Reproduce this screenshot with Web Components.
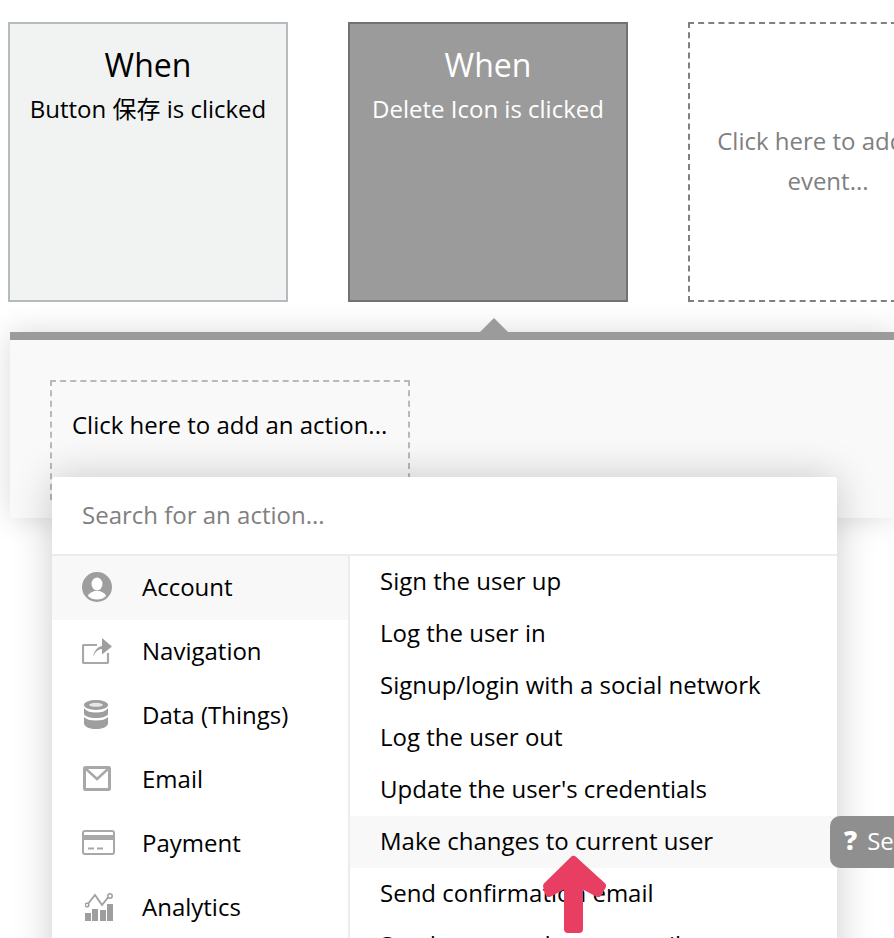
<!DOCTYPE html>
<html>
<head>
<meta charset="utf-8">
<title>Workflow</title>
<style>
html,body{margin:0;padding:0;background:#fff;overflow:hidden;}
body{width:894px;height:938px;font-family:"Open Sans","Noto Sans CJK SC",sans-serif;color:#000;}
</style>
</head>
<body>
<wf-page>
  <wf-event slot="events" title-text="When">Button 保存 is clicked</wf-event>
  <wf-event slot="events" title-text="When" selected>Delete Icon is clicked</wf-event>
  <wf-event slot="events" empty>Click here to add an event...</wf-event>
  <wf-panel slot="panel"></wf-panel>
  <wf-action-menu slot="menu">
    <wf-category icon="account" active>Account</wf-category>
    <wf-category icon="nav">Navigation</wf-category>
    <wf-category icon="data">Data (Things)</wf-category>
    <wf-category icon="email">Email</wf-category>
    <wf-category icon="payment">Payment</wf-category>
    <wf-category icon="analytics">Analytics</wf-category>
    <wf-item slot="items">Sign the user up</wf-item>
    <wf-item slot="items">Log the user in</wf-item>
    <wf-item slot="items">Signup/login with a social network</wf-item>
    <wf-item slot="items">Log the user out</wf-item>
    <wf-item slot="items">Update the user's credentials</wf-item>
    <wf-item slot="items" active>Make changes to current user</wf-item>
    <wf-item slot="items">Send confirmation email</wf-item>
    <wf-item slot="items">Send password reset email</wf-item>
  </wf-action-menu>
  <wf-help slot="help">See</wf-help>
  <wf-arrow slot="arrow"></wf-arrow>
</wf-page>

<script>
//icons for the left column of the action menu
const ICONS = {
    account: `<svg width="30" height="30" viewBox="0 0 30 30"><circle cx="15" cy="15" r="15" fill="#9e9e9e"/><ellipse cx="15" cy="12" rx="5.500" ry="6.500" fill="#fff"/><path d="M6 24c.5-2.500 4-4 6.500-5h5c2.500 1 6 2.500 6.500 5-1.500 1.800-5 3.500-9 3.500S7.500 25.800 6 24z" fill="#fff"/></svg>`,
    nav: `<svg width="30" height="26" viewBox="0 0 30 26"><path d="M15 7H2a1 1 0 0 0-1 1v16a1 1 0 0 0 1 1h23a1 1 0 0 0 1-1v-9" fill="none" stroke="#a8a8a8" stroke-width="2.200"/><path d="M11 19c1-6 4-10 9-11V0l10 8.500-10 8V11c-4 0-7 3-9 8z" fill="#9e9e9e"/></svg>`,
    data: `<svg width="24" height="29" viewBox="0 0 24 29" style="margin-left:2px"><ellipse cx="12" cy="5" rx="12" ry="5" fill="#9e9e9e"/><ellipse cx="12" cy="4.800" rx="7" ry="2" fill="#e6e6e6"/><path d="M0 8c2 3 6 4.500 12 4.500S22 11 24 8v6c-1 2.500-6 4-12 4S1 16.500 0 14z" fill="#9e9e9e"/><path d="M0 17c2 2.500 6 3.500 12 3.500S22 19.500 24 17v7c-1 3-6 5-12 5S1 27 0 24z" fill="#9e9e9e"/></svg>`,
    email: `<svg width="28" height="25" viewBox="0 0 28 25" style="margin-left:1px"><rect x="1.500" y="1.500" width="25" height="22" rx="1" fill="none" stroke="#a8a8a8" stroke-width="3"/><path d="M3 3l11 10L25 3" fill="none" stroke="#a8a8a8" stroke-width="2.500"/></svg>`,
    payment: `<svg width="33" height="25" viewBox="0 0 33 25"><rect x="1" y="1" width="31" height="23" rx="2" fill="none" stroke="#a8a8a8" stroke-width="2"/><rect x="1" y="5" width="31" height="5" fill="#a8a8a8"/><path d="M6 18.500h6M15 18.500h6" stroke="#a8a8a8" stroke-width="2"/></svg>`,
    analytics: `<svg width="28" height="28" viewBox="0 0 28 28" style="margin-left:3px"><g fill="#9e9e9e"><rect x="0" y="20" width="6" height="8"/><rect x="7" y="16" width="6" height="12"/><rect x="15" y="17" width="6" height="11"/><rect x="22" y="11" width="6" height="17"/></g><path d="M2 12l8-10 7 10 8-10" fill="none" stroke="#9e9e9e" stroke-width="1.800"/><g fill="#fff" stroke="#9e9e9e" stroke-width="1.500"><circle cx="2" cy="12" r="1.800"/><circle cx="25" cy="3" r="2.200"/></g></svg>`
}

//tiny helper so every element below does not repeat attachShadow
class WfBase extends HTMLElement{
    constructor(){
        super()
        this.attachShadow({mode: "open"})
    }
    render(html){
        this.shadowRoot.innerHTML = html
    }
}

class WfPage extends WfBase{
    connectedCallback(){
        this.render(`
            <style>
                :host{display:block;position:relative;width:894px;height:938px;overflow:hidden;}
                .events{display:flex;gap:60px;padding:22px 0 0 8px;width:1100px;}
                .panel{padding:30px 0 0 10px;}
            </style>
            <div class="events"><slot name="events"></slot></div>
            <div class="panel"><slot name="panel"></slot></div>
            <slot name="menu"></slot>
            <slot name="help"></slot>
            <slot name="arrow"></slot>
        `)
    }
}
customElements.define('wf-page', WfPage)

class WfEvent extends WfBase{
    connectedCallback(){
        const title = this.getAttribute('title-text')
        this.render(`
            <style>
                :host{display:flex;flex-direction:column;box-sizing:border-box;flex:none;width:280px;height:280px;
                    border:2px solid #b4babd;background:#f1f3f3;color:#000;text-align:center;font-size:24px;}
                :host([selected]){background:#9b9b9b;border-color:#717171;color:#fff;}
                :host([empty]){background:#fff;border:2px dashed #808080;color:#808080;justify-content:center;padding:0 20px 2px;line-height:40px;}
                .title{font-size:32px;line-height:44px;margin-top:19px;}
                .sub{line-height:34px;margin-top:5px;}
            </style>
            ${title ? `<div class="title">${title}</div><div class="sub"><slot></slot></div>` : `<div><slot></slot></div>`}
        `)
    }
}
customElements.define('wf-event', WfEvent)

class WfPanel extends WfBase{
    connectedCallback(){
        this.render(`
            <style>
                :host{display:block;position:relative;box-sizing:border-box;height:186px;background:#f9f9f9;border-top:8px solid #9b9b9b;
                    border-bottom-left-radius:3px;box-shadow:0 0 30px rgba(0,0,0,.15);padding:40px 0 0 40px;}
                .notch{position:absolute;left:470px;top:-22px;width:0;height:0;border:14px solid transparent;border-top:0;border-bottom-color:#9b9b9b;}
                .add{box-sizing:border-box;width:360px;height:120px;border:2px dashed #b9b9b9;padding:26px 0 0 20px;font-size:24px;line-height:34px;color:#000;white-space:nowrap;}
            </style>
            <div class="notch"></div>
            <div class="add">Click here to add an action...</div>
        `)
    }
}
customElements.define('wf-panel', WfPanel)

class WfActionMenu extends WfBase{
    connectedCallback(){
        this.render(`
            <style>
                :host{display:block;position:absolute;left:52px;top:477px;width:785px;height:520px;background:#fff;
                    border-radius:3px 3px 0 0;box-shadow:0 0 40px rgba(0,0,0,.2);font-size:24px;}
                .search{box-sizing:border-box;height:79px;padding:21px 0 0 30px;line-height:34px;color:#808080;border-bottom:2px solid #ececec;}
                .body{display:flex;}
                .cats{width:296px;flex:none;border-right:2px solid #ececec;}
                .items{flex:1;}
            </style>
            <div class="search">Search for an action...</div>
            <div class="body">
                <div class="cats"><slot></slot></div>
                <div class="items"><slot name="items"></slot></div>
            </div>
        `)
    }
}
customElements.define('wf-action-menu', WfActionMenu)

class WfCategory extends WfBase{
    connectedCallback(){
        this.render(`
            <style>
                :host{display:flex;align-items:center;box-sizing:border-box;height:64px;padding-bottom:3px;color:#000;}
                :host([active]){background:#f8f8f8;}
                .icon{width:90px;flex:none;display:flex;padding-left:30px;box-sizing:border-box;}
                .label{margin-bottom:1px;}
            </style>
            <div class="icon">${ICONS[this.getAttribute('icon')]}</div>
            <div class="label"><slot></slot></div>
        `)
    }
}
customElements.define('wf-category', WfCategory)

class WfItem extends WfBase{
    connectedCallback(){
        this.render(`
            <style>
                :host{display:flex;align-items:center;box-sizing:border-box;height:52px;padding:0 0 4px 30px;color:#000;white-space:nowrap;}
                :host([active]){background:#f8f8f8;}
            </style>
            <slot></slot>
        `)
    }
}
customElements.define('wf-item', WfItem)

class WfHelp extends WfBase{
    connectedCallback(){
        this.render(`
            <style>
                :host{display:flex;align-items:center;position:absolute;left:830px;top:816px;box-sizing:border-box;width:120px;height:52px;
                    background:#8f8f8f;border-radius:10px 0 0 10px;color:#fff;font-size:24px;padding:0 0 4px 14px;}
                b{font-weight:800;font-size:26px;margin-right:10px;}
            </style>
            <b>?</b><slot></slot>
        `)
    }
}
customElements.define('wf-help', WfHelp)

class WfArrow extends WfBase{
    connectedCallback(){
        this.render(`
            <style>
                :host{display:block;position:absolute;left:540px;top:853px;width:68px;height:84px;}
            </style>
            <svg width="68" height="84" viewBox="0 0 68 84">
                <path d="M33.500 7L7 33l2 7 19-10v46h11V30l19 10 4-7z" fill="#e83e62" stroke="#e83e62" stroke-width="8" stroke-linejoin="round"/>
            </svg>
        `)
    }
}
customElements.define('wf-arrow', WfArrow)
</script>
</body>
</html>
